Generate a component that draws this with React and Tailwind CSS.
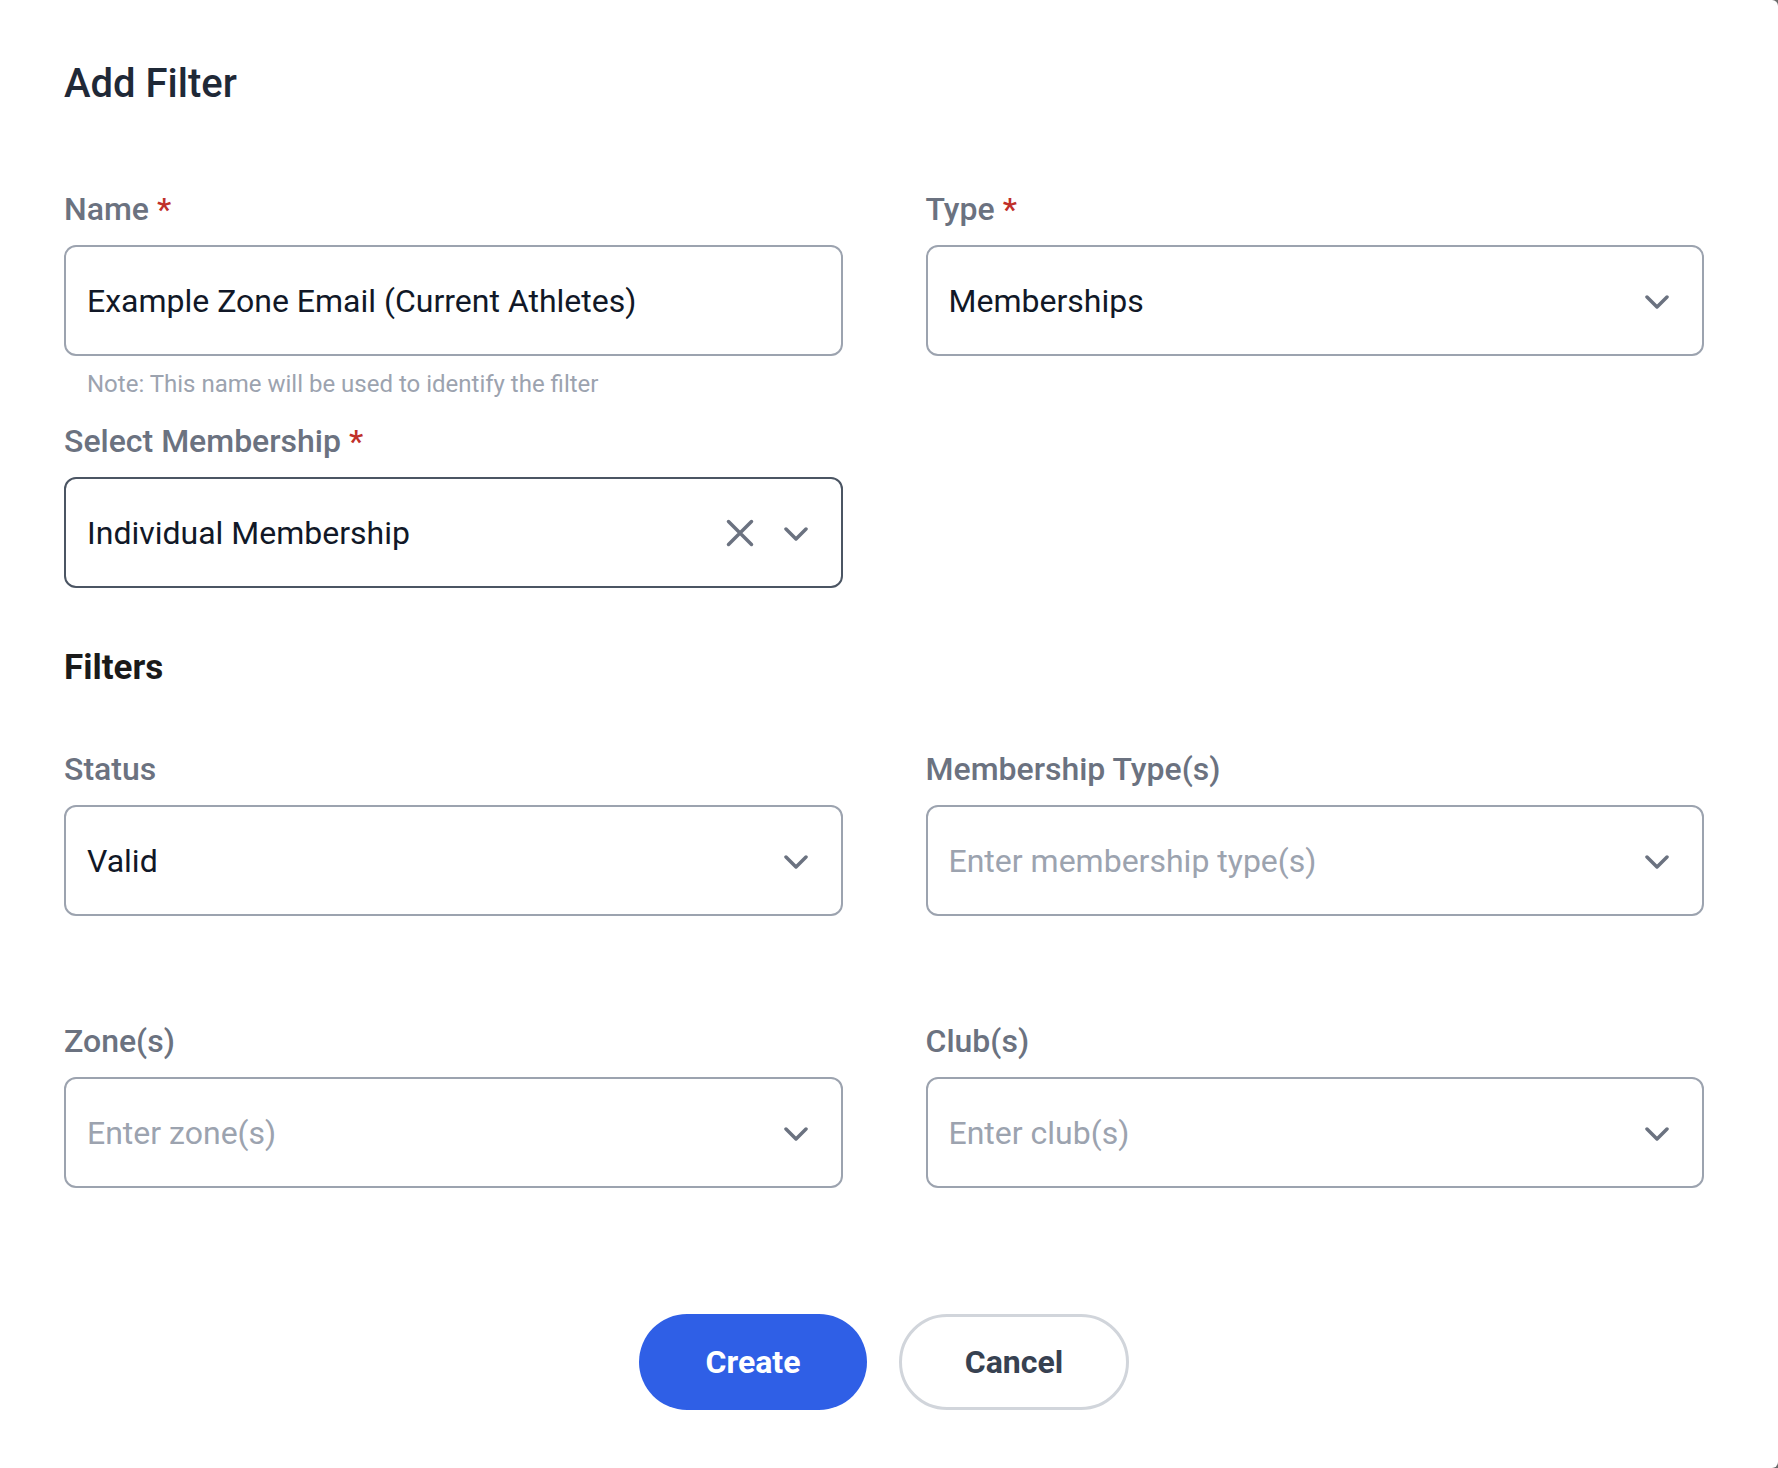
import React from "react";

// =========================
// ICONS
// =========================
function Chevron() {
  return (
    <svg width="24" height="14" viewBox="0 0 24 14" fill="none">
      <path
        d="M2 2 L12 12 L22 2"
        stroke="#6b7280"
        strokeWidth="3.5"
        strokeLinecap="round"
        strokeLinejoin="round"
      />
    </svg>
  );
}

function Cross() {
  return (
    <svg width="28" height="28" viewBox="0 0 28 28" fill="none">
      <path
        d="M2.5 2.5 L25.5 25.5 M25.5 2.5 L2.5 25.5"
        stroke="#6b7280"
        strokeWidth="3.5"
        strokeLinecap="round"
      />
    </svg>
  );
}

// =========================
// FIELD PARTS
// =========================
function Label({ text, required }) {
  return (
    <div className="text-[32px] leading-[40px] font-medium text-[#6b7280] mb-4">
      {text}
      {required && <span className="text-[#c0302a] ml-2">*</span>}
    </div>
  );
}

function Box({ value, placeholder, focused, clearable, chevron }) {
  return (
    <div
      className={
        focused
          ? "h-[111px] flex items-center border-2 border-[#4b5563] rounded-[12px] pl-[21px] pr-[33px] bg-white"
          : "h-[111px] flex items-center border-2 border-[#9ca3af] rounded-[12px] pl-[21px] pr-[33px] bg-white"
      }
    >
      <div
        className={
          value
            ? "flex-1 text-[32px] text-[#111827]"
            : "flex-1 text-[32px] text-[#9ca3af]"
        }
      >
        {value || placeholder}
      </div>

      {clearable && (
        <div className="mr-[30px] flex items-center">
          <Cross />
        </div>
      )}

      {chevron && (
        <div className="pt-[2px]">
          <Chevron />
        </div>
      )}
    </div>
  );
}

export default function App() {
  return (
    <div className="min-h-screen bg-[#6b6b6b]" style={{ fontFamily: "Roboto, 'Liberation Sans', sans-serif" }}>
      <div className="min-h-[1468px] bg-white rounded-tr-[6px] rounded-br-[6px] pl-[64px] pr-[74px] pt-[60px]">

        {/* ================= TITLE ================= */}
        <h1 className="text-[40px] leading-[48px] font-medium text-[#1f2937]">
          Add Filter
        </h1>

        {/* ================= NAME / TYPE ================= */}
        <div className="grid grid-cols-2 gap-x-[83px] mt-[81px]">
          <div>
            <Label text="Name" required />
            <Box value="Example Zone Email (Current Athletes)" />
            <p className="mt-[13px] pl-[23px] text-[24px] leading-[30px] text-[#9ca3af]">
              Note: This name will be used to identify the filter
            </p>
          </div>

          <div>
            <Label text="Type" required />
            <Box value="Memberships" chevron />
          </div>
        </div>

        {/* ================= MEMBERSHIP ================= */}
        <div className="grid grid-cols-2 gap-x-[83px] mt-[22px]">
          <div>
            <Label text="Select Membership" required />
            <Box value="Individual Membership" focused clearable chevron />
          </div>
        </div>

        {/* ================= FILTERS ================= */}
        <h2 className="mt-[60px] text-[35px] leading-[40px] font-bold text-[#1a1a1a]">
          Filters
        </h2>

        <div className="grid grid-cols-2 gap-x-[83px] gap-y-[105px] mt-[61px]">
          <div>
            <Label text="Status" />
            <Box value="Valid" chevron />
          </div>

          <div>
            <Label text="Membership Type(s)" />
            <Box placeholder="Enter membership type(s)" chevron />
          </div>

          <div>
            <Label text="Zone(s)" />
            <Box placeholder="Enter zone(s)" chevron />
          </div>

          <div>
            <Label text="Club(s)" />
            <Box placeholder="Enter club(s)" chevron />
          </div>
        </div>

        {/* ================= ACTIONS ================= */}
        <div className="flex justify-center gap-[32px] mt-[126px]">
          <button className="w-[228px] h-[96px] rounded-full bg-[#2f5fe6] text-white text-[32px] font-bold">
            Create
          </button>

          <button className="w-[230px] h-[96px] rounded-full border-[3px] border-[#d1d5db] bg-white text-[#374151] text-[32px] font-bold">
            Cancel
          </button>
        </div>

      </div>
    </div>
  );
}
